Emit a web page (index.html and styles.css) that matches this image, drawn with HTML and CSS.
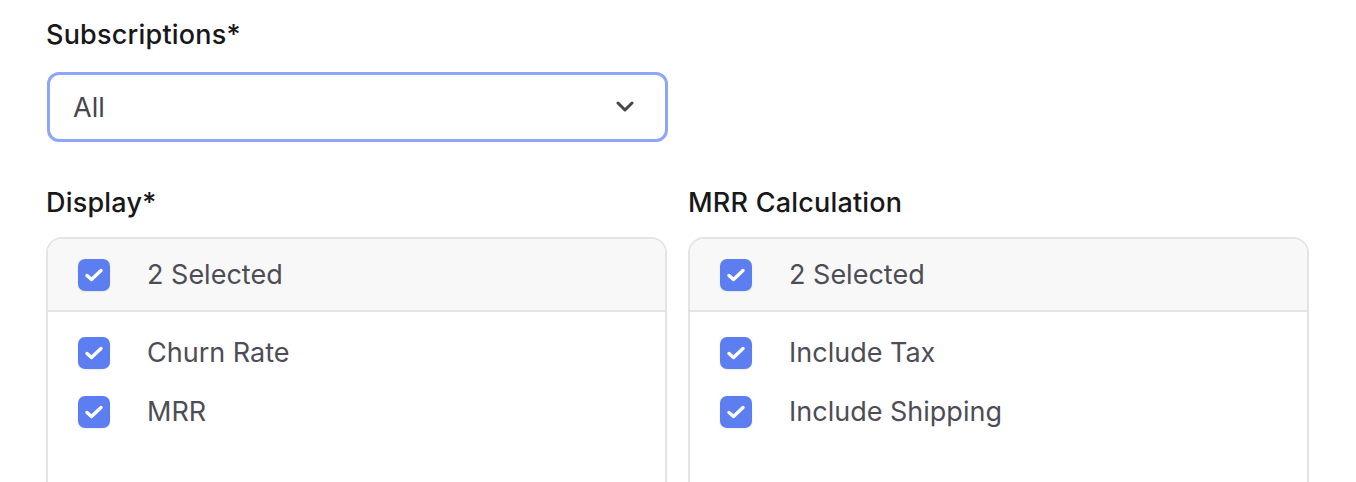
FILE: index.html
```html
<!DOCTYPE html>
<html>
<head>
  <meta charset="UTF-8">
  <title>Report Settings</title>
  <link rel="stylesheet" href="styles.css">
</head>
<body>
  <div class="form">
    <div class="field field-narrow">
      <label class="field-label">Subscriptions*</label>
      <div class="select">
        <span>All</span>
        <svg class="chevron" width="20" height="12" viewBox="0 0 20 12">
          <polyline points="3,2 10,9 17,2" fill="none" stroke="#45454d" stroke-width="3" stroke-linecap="round" stroke-linejoin="round"/>
        </svg>
      </div>
    </div>

    <div class="columns">
      <div class="field">
        <label class="field-label">Display*</label>
        <div class="checklist">
          <div class="check-header">
            <span class="checkbox"><svg width="20" height="16" viewBox="0 0 20 16"><polyline points="3,8.5 7.5,12.5 17,3.5" fill="none" stroke="#fff" stroke-width="3.4" stroke-linecap="round" stroke-linejoin="round"/></svg></span>
            <span>2 Selected</span>
          </div>
          <div class="check-items">
            <div class="check-item">
              <span class="checkbox"><svg width="20" height="16" viewBox="0 0 20 16"><polyline points="3,8.5 7.5,12.5 17,3.5" fill="none" stroke="#fff" stroke-width="3.4" stroke-linecap="round" stroke-linejoin="round"/></svg></span>
              <span>Churn Rate</span>
            </div>
            <div class="check-item">
              <span class="checkbox"><svg width="20" height="16" viewBox="0 0 20 16"><polyline points="3,8.5 7.5,12.5 17,3.5" fill="none" stroke="#fff" stroke-width="3.4" stroke-linecap="round" stroke-linejoin="round"/></svg></span>
              <span>MRR</span>
            </div>
          </div>
        </div>
      </div>

      <div class="field">
        <label class="field-label">MRR Calculation</label>
        <div class="checklist">
          <div class="check-header">
            <span class="checkbox"><svg width="20" height="16" viewBox="0 0 20 16"><polyline points="3,8.5 7.5,12.5 17,3.5" fill="none" stroke="#fff" stroke-width="3.4" stroke-linecap="round" stroke-linejoin="round"/></svg></span>
            <span>2 Selected</span>
          </div>
          <div class="check-items">
            <div class="check-item">
              <span class="checkbox"><svg width="20" height="16" viewBox="0 0 20 16"><polyline points="3,8.5 7.5,12.5 17,3.5" fill="none" stroke="#fff" stroke-width="3.4" stroke-linecap="round" stroke-linejoin="round"/></svg></span>
              <span>Include Tax</span>
            </div>
            <div class="check-item">
              <span class="checkbox"><svg width="20" height="16" viewBox="0 0 20 16"><polyline points="3,8.5 7.5,12.5 17,3.5" fill="none" stroke="#fff" stroke-width="3.4" stroke-linecap="round" stroke-linejoin="round"/></svg></span>
              <span>Include Shipping</span>
            </div>
          </div>
        </div>
      </div>
    </div>
  </div>
</body>
</html>
```

FILE: styles.css
```css
body {
  margin: 0;
  font-family: Inter, "Noto Sans", sans-serif;
  background-color: #fff;
  color: #1b1b1f;
}

.form {
  width: 1263px;
  padding: 17px 0 0 46px;
}

.field-narrow {
  width: 622px;
}

.field-label {
  display: block;
  font-size: 27px;
  line-height: 36px;
  font-weight: 500;
  letter-spacing: 0.2px;
  color: #18181b;
  margin-bottom: 19px;
}

.columns .field-label {
  margin-bottom: 16px;
}

.select {
  display: flex;
  align-items: center;
  justify-content: space-between;
  height: 70px;
  box-sizing: border-box;
  margin-left: 1px;
  padding: 0 30px 0 23px;
  border: 3px solid #8ea6f7;
  border-radius: 12px;
  font-size: 27px;
  color: #46464e;
}

.chevron {
  display: block;
}

.columns {
  display: grid;
  grid-template-columns: 621px 621px;
  column-gap: 21px;
  margin-top: 43px;
}

.checklist {
  border: 2px solid #e4e4e6;
  border-bottom: none;
  border-radius: 16px 16px 0 0;
  height: 280px;
  font-size: 27px;
  color: #4d4d56;
}

.check-header {
  display: flex;
  align-items: center;
  height: 71px;
  padding-left: 30px;
  background-color: #f8f8f8;
  border-bottom: 2px solid #e4e4e6;
  border-radius: 14px 14px 0 0;
}

.check-items {
  display: flex;
  flex-direction: column;
  gap: 26px;
  padding: 24px 0 0 30px;
}

.check-item {
  display: flex;
  align-items: center;
}

.checkbox {
  display: flex;
  align-items: center;
  justify-content: center;
  width: 32px;
  height: 32px;
  margin-right: 37px;
  background-color: #5c7ef0;
  border-radius: 7px;
  box-shadow: 0 1px 2px rgba(0, 0, 0, 0.08);
}
```
